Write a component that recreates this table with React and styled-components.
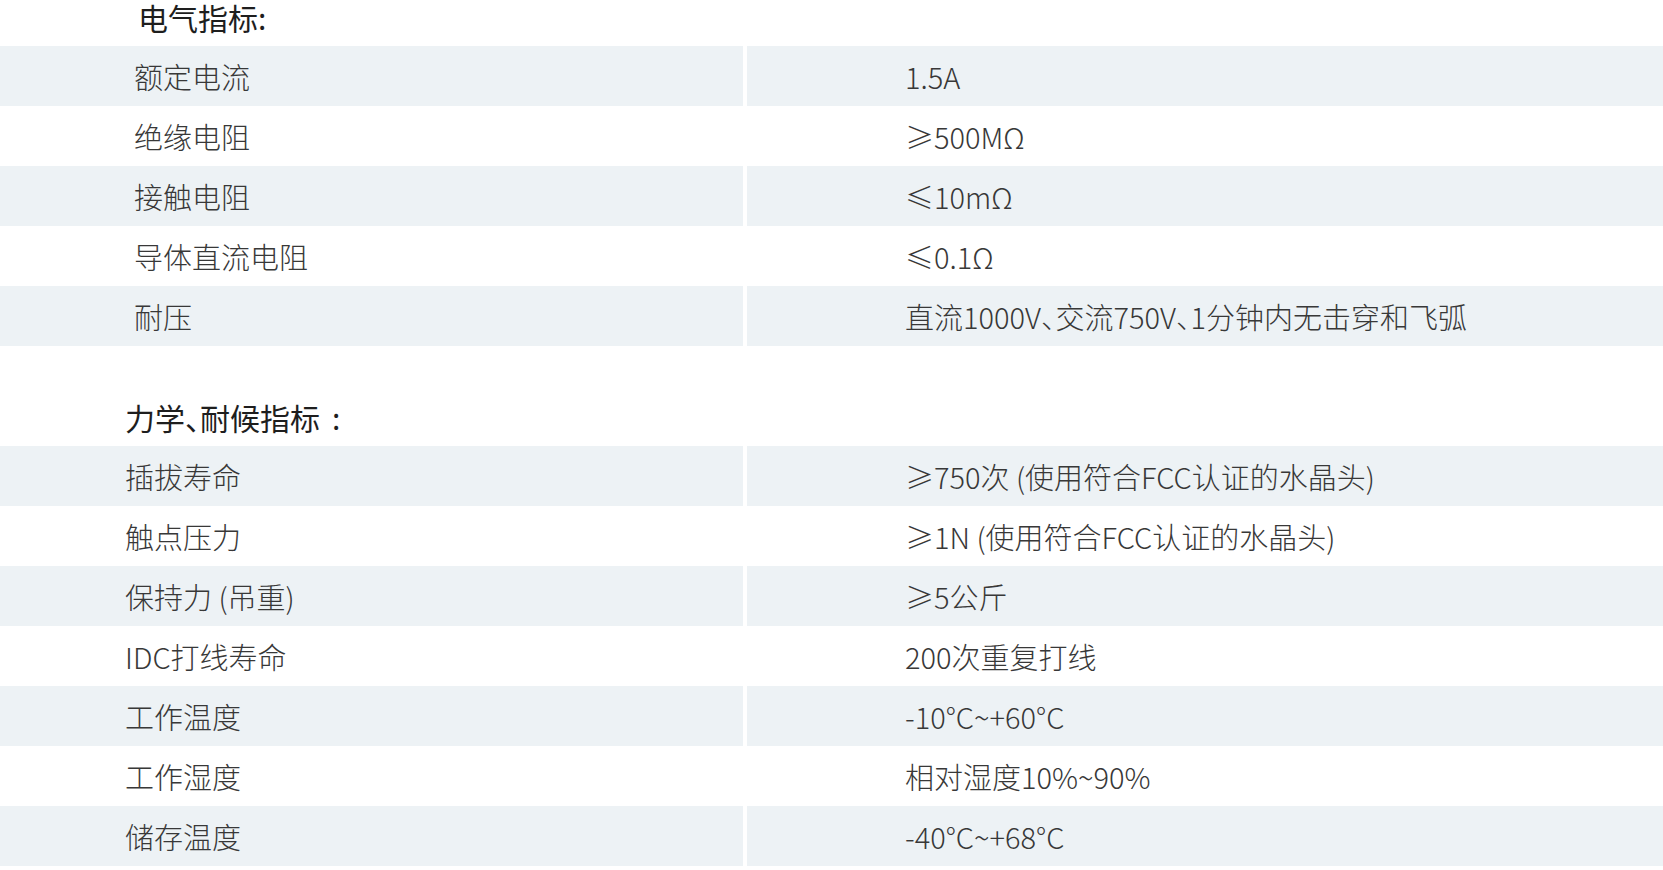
import React from 'react';
import styled, { createGlobalStyle } from 'styled-components';

const GlobalStyle = createGlobalStyle`
  html, body {
    margin: 0;
    padding: 0;
    background: #ffffff;
  }
`;

const Page = styled.div`
  width: 1663px;
  background: #ffffff;
  font-family: "Noto Sans CJK SC", "Noto Sans", sans-serif;
`;

const Heading = styled.h3`
  margin: ${(p) => (p.$first ? '0' : '54px')} 0 12px;
  padding-left: ${(p) => p.$indent}px;
  height: 34px;
  line-height: 34px;
  font-size: 30px;
  font-weight: 400;
  color: #1e1e1e;
  white-space: nowrap;
`;

const Colon = styled.span`
  margin-left: ${(p) => p.$gap || 0}px;
`;

const Table = styled.div`
  display: flex;
  flex-direction: column;
`;

const Row = styled.div`
  display: grid;
  grid-template-columns: 743px 1fr;
  column-gap: 4px;
  height: 60px;
`;

const Cell = styled.div`
  display: flex;
  align-items: center;
  padding-left: ${(p) => p.$indent}px;
  background: ${(p) => (p.$shaded ? '#edf2f5' : '#ffffff')};
  font-size: 29px;
  font-weight: 300;
  color: #383838;
  white-space: pre;
`;

// half-width ideographic comma, as in the original
const Dun = styled.span`
  font-feature-settings: "halt";
`;

const electrical = [
  ['额定电流', '1.5A'],
  ['绝缘电阻', '≥500MΩ'],
  ['接触电阻', '≤10mΩ'],
  ['导体直流电阻', '≤0.1Ω'],
  ['耐压', <>直流1000V<Dun>、</Dun>交流750V<Dun>、</Dun>1分钟内无击穿和飞弧</>],
];

const mechanical = [
  ['插拔寿命', '≥750次 (使用符合FCC认证的水晶头)'],
  ['触点压力', '≥1N (使用符合FCC认证的水晶头)'],
  ['保持力 (吊重)', '≥5公斤'],
  ['IDC打线寿命', '200次重复打线'],
  ['工作温度', '-10°C~+60°C'],
  ['工作湿度', '相对湿度10%~90%'],
  ['储存温度', '-40°C~+68°C'],
];

function SpecTable({ rows, indent }) {
  return (
    <Table>
      {rows.map(([name, value], i) => (
        <Row key={name}>
          <Cell $shaded={i % 2 === 0} $indent={indent}>{name}</Cell>
          <Cell $shaded={i % 2 === 0} $indent={158}>{value}</Cell>
        </Row>
      ))}
    </Table>
  );
}

export default function App() {
  return (
    <Page>
      <GlobalStyle />
      <Heading $first $indent={138}>电气指标<Colon>:</Colon></Heading>
      <SpecTable rows={electrical} indent={134} />
      <Heading $indent={125}>力学<Dun>、</Dun>耐候指标<Colon $gap={12}>:</Colon></Heading>
      <SpecTable rows={mechanical} indent={125} />
    </Page>
  );
}
